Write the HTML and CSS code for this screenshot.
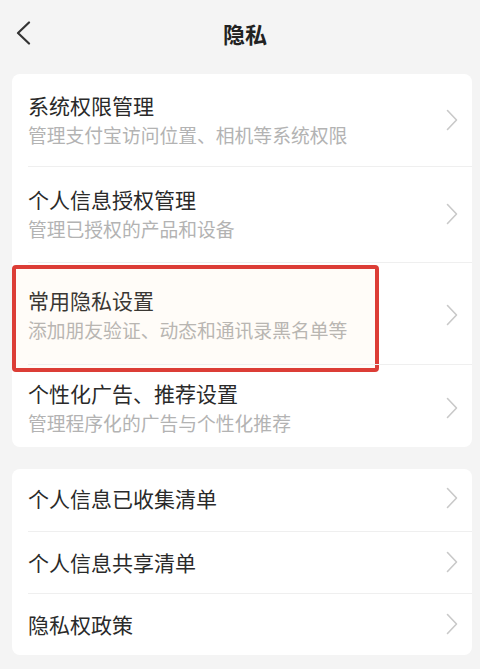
FILE: index.html
```html
<!DOCTYPE html>
<html lang="zh-CN">
<head>
<meta charset="utf-8">
<title>隐私</title>
<link rel="stylesheet" href="styles.css">
</head>
<body>
<header class="nav">
  <svg class="back" width="16" height="24" viewBox="0 0 16 24"><path d="M14 1.5 L3 12 L14 22.5" fill="none" stroke="#333" stroke-width="2.2" stroke-linecap="round" stroke-linejoin="round"/></svg>
  <h1 class="nav-title">隐私</h1>
</header>

<section class="card card-main">
  <div class="item">
    <div class="text">
      <div class="title">系统权限管理</div>
      <div class="sub">管理支付宝访问位置、相机等系统权限</div>
    </div>
    <svg class="chev" width="12" height="22" viewBox="0 0 12 22"><path d="M1.5 1.5 L10.5 11 L1.5 20.5" fill="none" stroke="#c9c9c9" stroke-width="1.6" stroke-linecap="round" stroke-linejoin="round"/></svg>
  </div>
  <div class="item">
    <div class="text">
      <div class="title">个人信息授权管理</div>
      <div class="sub">管理已授权的产品和设备</div>
    </div>
    <svg class="chev" width="12" height="22" viewBox="0 0 12 22"><path d="M1.5 1.5 L10.5 11 L1.5 20.5" fill="none" stroke="#c9c9c9" stroke-width="1.6" stroke-linecap="round" stroke-linejoin="round"/></svg>
  </div>
  <div class="item item-marked">
    <div class="text">
      <div class="title">常用隐私设置</div>
      <div class="sub">添加朋友验证、动态和通讯录黑名单等</div>
    </div>
    <svg class="chev" width="12" height="22" viewBox="0 0 12 22"><path d="M1.5 1.5 L10.5 11 L1.5 20.5" fill="none" stroke="#c9c9c9" stroke-width="1.6" stroke-linecap="round" stroke-linejoin="round"/></svg>
    <div class="highlight"></div>
  </div>
  <div class="item">
    <div class="text">
      <div class="title">个性化广告、推荐设置</div>
      <div class="sub">管理程序化的广告与个性化推荐</div>
    </div>
    <svg class="chev" width="12" height="22" viewBox="0 0 12 22"><path d="M1.5 1.5 L10.5 11 L1.5 20.5" fill="none" stroke="#c9c9c9" stroke-width="1.6" stroke-linecap="round" stroke-linejoin="round"/></svg>
  </div>
</section>

<section class="card card-list">
  <div class="row">
    <div class="title">个人信息已收集清单</div>
    <svg class="chev" width="12" height="22" viewBox="0 0 12 22"><path d="M1.5 1.5 L10.5 11 L1.5 20.5" fill="none" stroke="#c9c9c9" stroke-width="1.6" stroke-linecap="round" stroke-linejoin="round"/></svg>
  </div>
  <div class="row">
    <div class="title">个人信息共享清单</div>
    <svg class="chev" width="12" height="22" viewBox="0 0 12 22"><path d="M1.5 1.5 L10.5 11 L1.5 20.5" fill="none" stroke="#c9c9c9" stroke-width="1.6" stroke-linecap="round" stroke-linejoin="round"/></svg>
  </div>
  <div class="row">
    <div class="title">隐私权政策</div>
    <svg class="chev" width="12" height="22" viewBox="0 0 12 22"><path d="M1.5 1.5 L10.5 11 L1.5 20.5" fill="none" stroke="#c9c9c9" stroke-width="1.6" stroke-linecap="round" stroke-linejoin="round"/></svg>
  </div>
</section>
</body>
</html>
```

FILE: styles.css
```css
* { box-sizing: border-box; }

html, body {
  margin: 0;
  padding: 0;
  background: #f4f4f4;
  font-family: "Noto Sans CJK SC", "Noto Sans", sans-serif;
  color: #2b2b2b;
}

body {
  width: 480px;
  height: 669px;
  overflow: hidden;
}

.nav {
  position: relative;
  height: 66px;
  display: flex;
  align-items: center;
  justify-content: center;
  padding-left: 10px;
}

.back {
  position: absolute;
  left: 15px;
  top: 21px;
}

.nav-title {
  margin: 0;
  font-size: 22px;
  font-weight: 700;
  color: #222;
  line-height: 30px;
}

.card {
  background: #fff;
  border-radius: 8px;
  margin: 8px 8px 0 12px;
}

.card-list {
  margin-top: 22px;
}

.item {
  position: relative;
  display: flex;
  align-items: center;
  padding: 0 14px 0 16px;
}

.item:nth-child(1) { height: 92px; }
.item:nth-child(2) { height: 96px; }
.item:nth-child(3) { height: 102px; padding-top: 4px; }
.item:nth-child(4) { height: 83px; padding-top: 4px; }

.item + .item::before,
.row + .row::before {
  content: "";
  position: absolute;
  left: 16px;
  right: 0;
  top: 0;
  border-top: 1px solid #efefef;
}

.text {
  flex: 1;
  display: flex;
  flex-direction: column;
}

.title {
  font-size: 21px;
  line-height: 30px;
  color: #2a2a2a;
  flex: 1;
}

.sub {
  font-size: 18.8px;
  line-height: 30px;
  color: #b3b3b3;
}

.chev {
  flex: none;
  display: block;
}

.highlight {
  position: absolute;
  left: 0;
  top: 3px;
  width: 367px;
  height: 107px;
  border: 4px solid #dc3d36;
  border-radius: 4px;
  background: rgba(255, 215, 170, 0.08);
  pointer-events: none;
}

.row {
  position: relative;
  height: 62px;
  display: flex;
  align-items: center;
  padding: 0 14px 0 16px;
}

.row:first-child { padding-bottom: 4px; }
```
